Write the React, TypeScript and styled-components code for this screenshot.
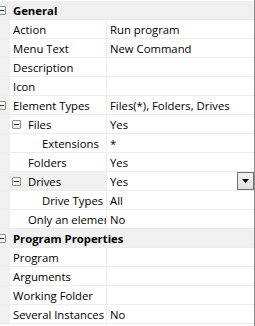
import React from "react";
import styled, { createGlobalStyle } from "styled-components";

const Global = createGlobalStyle`
  html, body { margin: 0; padding: 0; background: #fff; overflow: hidden; }
  body { font-family: "Open Sans", "Noto Sans", sans-serif; font-size: 11.3px; color: #000; }
`;

const Grid = styled.div`
  width: 254px;
  height: 325px;
  padding-top: 1px;
  border-right: 1px solid #8c8c8c;
  background: #fff;
  overflow: hidden;
`;

const Row = styled.div<{ $cat?: boolean }>`
  display: flex;
  height: 18px;
  border-bottom: 1px solid #ececec;
  background: ${p => (p.$cat ? "#f0f0f0" : "#fff")};
`;

const Head = styled.div<{ $cat?: boolean; $sel?: boolean }>`
  display: flex;
  align-items: center;
  flex: ${p => (p.$cat ? "1 1 auto" : "0 0 106px")};
  width: ${p => (p.$cat ? "auto" : "106px")};
  overflow: hidden;
  white-space: nowrap;
  background: ${p =>
    p.$sel
      ? "#f0f0f0"
      : "linear-gradient(to right, #f0f0f0 10px, transparent 10px)"};
`;

const Toggle = styled.span<{ $x: number }>`
  position: relative;
  flex: none;
  box-sizing: border-box;
  width: 9px;
  height: 9px;
  margin-left: ${p => p.$x - 16}px;
  margin-right: 7px;
  margin-top: 1px;
  border: 1px solid #8e8f8f;
  border-radius: 1px;
  background: linear-gradient(#fcfcfc, #ececec);
  &::after {
    content: "";
    position: absolute;
    left: 1px;
    right: 1px;
    top: 3px;
    height: 1px;
    background: #2b2b2b;
  }
`;

const Label = styled.span<{ $x: number; $bold?: boolean }>`
  margin-left: ${p => p.$x}px;
  font-weight: ${p => (p.$bold ? 700 : 400)};
  line-height: 18px;
  padding-top: 2px;
`;

const Value = styled.div`
  flex: 1 1 auto;
  display: flex;
  align-items: center;
  border-left: 1px solid #ececec;
  padding-left: 3px;
  white-space: nowrap;
  overflow: hidden;
  line-height: 18px;
`;

const ValueText = styled.span`
  flex: 1 1 auto;
  padding-top: 2px;
`;

const DropButton = styled.span`
  flex: none;
  box-sizing: border-box;
  width: 17px;
  height: 18px;
  border: 1px solid #707070;
  background: linear-gradient(#f2f2f2, #e0e0e0);
  display: flex;
  align-items: center;
  justify-content: center;
  svg { display: block; }
`;

type Item = {
  name: string;
  value?: string;
  cat?: boolean;
  level?: number;
  toggle?: boolean;
  sel?: boolean;
  drop?: boolean;
};

const items: Item[] = [
  { name: "General", cat: true },
  { name: "Action", value: "Run program" },
  { name: "Menu Text", value: "New Command" },
  { name: "Description", value: "" },
  { name: "Icon", value: "" },
  { name: "Element Types", value: "Files(*), Folders, Drives", toggle: true },
  { name: "Files", value: "Yes", level: 1, toggle: true },
  { name: "Extensions", value: "*", level: 2 },
  { name: "Folders", value: "Yes", level: 1 },
  { name: "Drives", value: "Yes", level: 1, toggle: true, sel: true, drop: true },
  { name: "Drive Types", value: "All", level: 2 },
  { name: "Only an element of this type", value: "No", level: 1 },
  { name: "Program Properties", cat: true },
  { name: "Program", value: "" },
  { name: "Arguments", value: "" },
  { name: "Working Folder", value: "" },
  { name: "Several Instances", value: "No" },
];

const indent = [13, 28, 42];

export default function App() {
  return (
    <>
      <Global />
      <Grid>
        {items.map((it, i) => {
          const x = indent[it.level ?? 0];
          const hasToggle = it.cat || it.toggle;
          return (
            <Row key={i} $cat={it.cat}>
              <Head $cat={it.cat} $sel={it.sel}>
                {hasToggle && <Toggle $x={x} />}
                <Label $x={hasToggle ? 0 : x} $bold={it.cat}>
                  {it.name}
                </Label>
              </Head>
              {!it.cat && (
                <Value>
                  <ValueText>{it.value}</ValueText>
                  {it.drop && (
                    <DropButton>
                      <svg width="7" height="4" viewBox="0 0 7 4">
                        <path d="M0 0H7L3.5 4Z" fill="#000" />
                      </svg>
                    </DropButton>
                  )}
                </Value>
              )}
            </Row>
          );
        })}
      </Grid>
    </>
  );
}
